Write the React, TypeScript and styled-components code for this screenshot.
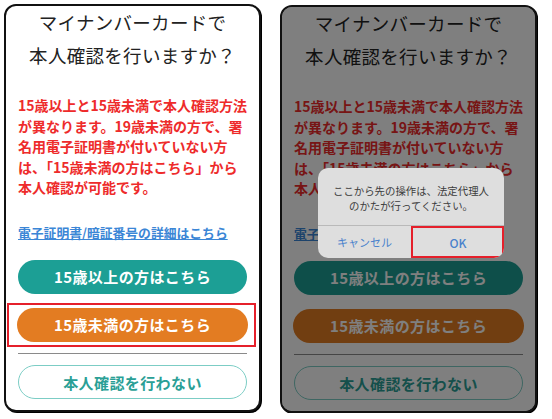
import React from "react";
import styled, { createGlobalStyle } from "styled-components";

const GlobalStyle = createGlobalStyle`
  html, body {
    margin: 0;
    padding: 0;
    background: #ffffff;
  }
  body {
    font-family: "Noto Sans CJK JP", "Noto Sans", sans-serif;
  }
`;

const Page = styled.div`
  display: flex;
  align-items: flex-start;
  gap: 19px;
  padding: 4px 0 0 4px;
`;

const Panel = styled.div<{ $offset?: number }>`
  position: relative;
  box-sizing: border-box;
  width: 257px;
  height: 408px;
  margin-top: ${(p) => p.$offset ?? 0}px;
  border: 2px solid #111;
  border-radius: 12px;
  box-shadow: 1px 1px 0 #000;
  background: #fff;
  padding: 0 12px;
  display: flex;
  flex-direction: column;
  overflow: hidden;
`;

const Title = styled.h1`
  margin: 0;
  font-size: 18.5px;
  font-weight: 400;
  line-height: 33px;
  color: #222;
  text-align: center;
  letter-spacing: 0.3px;
`;

const Notice = styled.p`
  margin: 23px 0 0;
  font-size: 14px;
  font-weight: 700;
  line-height: 20.5px;
  color: #ee2b2b;
  white-space: nowrap;
`;

const Link = styled.a`
  display: block;
  margin-top: 26px;
  font-size: 12.8px;
  font-weight: 700;
  line-height: 18px;
  color: #3b86d6;
  text-decoration: underline;
  white-space: nowrap;
`;

const PillButton = styled.button<{ $bg: string }>`
  box-sizing: border-box;
  width: 100%;
  height: 34px;
  border: none;
  border-radius: 17px;
  background: ${(p) => p.$bg};
  color: #fff;
  font-family: inherit;
  font-size: 15px;
  font-weight: 700;
  letter-spacing: 0.4px;
  display: flex;
  align-items: center;
  justify-content: center;
  padding: 0;
`;

const TealButton = styled(PillButton)`
  margin-top: 18px;
`;

const Highlight = styled.div<{ $on: boolean }>`
  box-sizing: border-box;
  margin: 9px -9px 0 -11px;
  padding: 3px 6px 3px 8px;
  border: 2px solid ${(p) => (p.$on ? "#e5202b" : "transparent")};
`;

const Separator = styled.hr`
  margin: 6px 0 0;
  border: none;
  height: 1.5px;
  background: #8a8a8a;
`;

const OutlineButton = styled.button`
  box-sizing: border-box;
  margin-top: 11px;
  width: 100%;
  height: 34px;
  border: 1.5px solid #7ccdc5;
  border-radius: 17px;
  background: #fff;
  color: #2a9f96;
  font-family: inherit;
  font-size: 15px;
  font-weight: 700;
  letter-spacing: 0.4px;
  padding: 0;
`;

const Dim = styled.div`
  position: absolute;
  inset: 0;
  background: rgba(0, 0, 0, 0.5);
`;

const Alert = styled.div`
  position: absolute;
  left: 36px;
  top: 161px;
  width: 186px;
  height: 90px;
  border-radius: 10px;
  background: #dedede;
  display: flex;
  flex-direction: column;
  overflow: hidden;
`;

const AlertMessage = styled.div`
  flex: 1;
  padding-top: 15px;
  font-size: 10.4px;
  line-height: 15px;
  color: #3c3c3c;
  text-align: center;
`;

const AlertActions = styled.div`
  height: 32px;
  display: grid;
  grid-template-columns: 1fr 1fr;
  border-top: 1px solid #b9b9b9;
`;

const AlertAction = styled.div<{ $primary?: boolean; $marked?: boolean }>`
  box-sizing: border-box;
  display: flex;
  align-items: center;
  justify-content: center;
  font-size: ${(p) => (p.$primary ? "12px" : "11px")};
  font-weight: ${(p) => (p.$primary ? 500 : 400)};
  color: #4a82cc;
  border-left: ${(p) => (p.$primary ? "1px solid #b9b9b9" : "none")};
  outline: ${(p) => (p.$marked ? "2px solid #e5202b" : "none")};
  outline-offset: -2px;
`;

function Screen({ highlight, children }: { highlight: boolean; children?: React.ReactNode }) {
  return (
    <Panel $offset={highlight ? 0 : 1}>
      <Title>
        マイナンバーカードで
        <br />
        本人確認を行いますか？
      </Title>
      <Notice>
        15歳以上と15歳未満で本人確認方法
        <br />
        が異なります。19歳未満の方で、署
        <br />
        名用電子証明書が付いていない方
        <br />
        は、「15歳未満の方はこちら」から
        <br />
        本人確認が可能です。
      </Notice>
      <Link href="#">電子証明書/暗証番号の詳細はこちら</Link>
      <TealButton $bg="#1c9f95">15歳以上の方はこちら</TealButton>
      <Highlight $on={highlight}>
        <PillButton $bg="#e37c22">15歳未満の方はこちら</PillButton>
      </Highlight>
      <Separator />
      <OutlineButton>本人確認を行わない</OutlineButton>
      {children}
    </Panel>
  );
}

export default function App() {
  return (
    <>
      <GlobalStyle />
      <Page>
        <Screen highlight />
        <Screen highlight={false}>
          <Dim />
          <Alert>
            <AlertMessage>
              ここから先の操作は、法定代理人
              <br />
              のかたが行ってください。
            </AlertMessage>
            <AlertActions>
              <AlertAction>キャンセル</AlertAction>
              <AlertAction $primary $marked>
                OK
              </AlertAction>
            </AlertActions>
          </Alert>
        </Screen>
      </Page>
    </>
  );
}
